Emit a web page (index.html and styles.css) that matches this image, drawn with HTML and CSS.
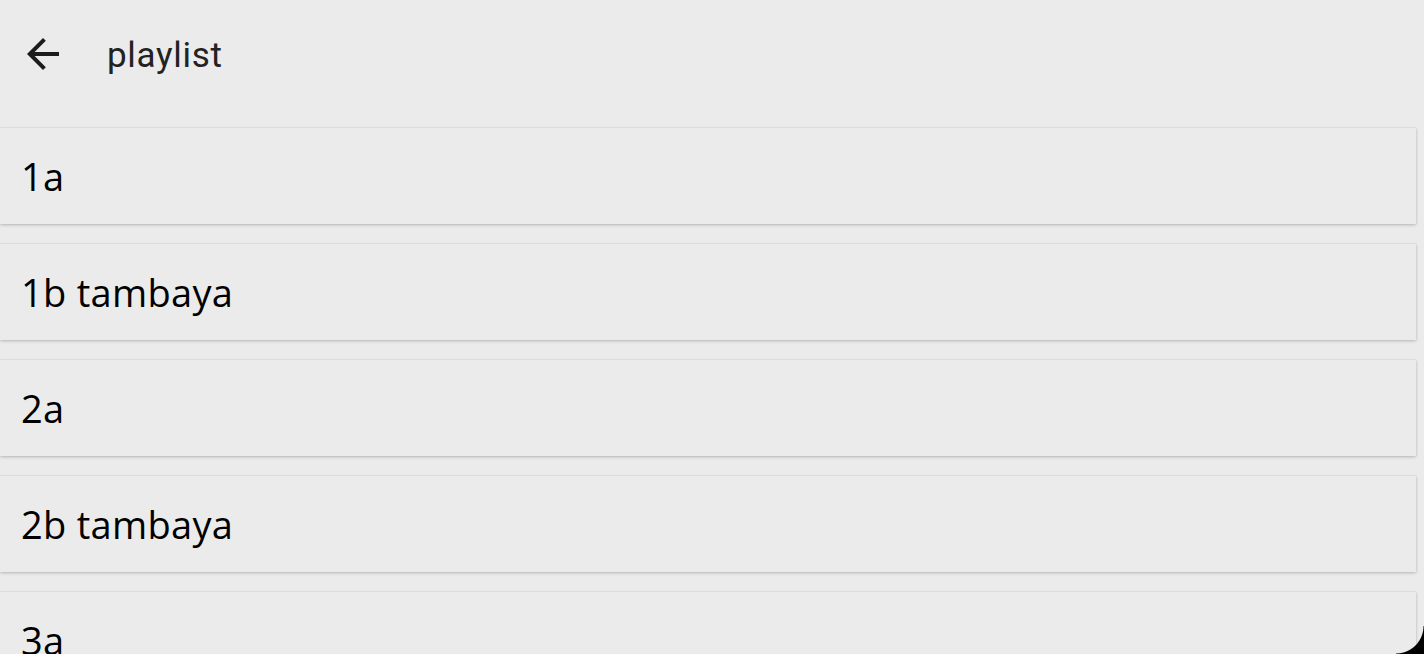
FILE: index.html
```html
<!DOCTYPE html>
<html>
<head>
<meta charset="utf-8">
<link rel="stylesheet" href="styles.css">
</head>
<body>
<div class="app">
  <header class="toolbar">
    <button class="back" aria-label="back">
      <svg viewBox="0 0 24 24" width="48" height="48"><path d="M20 11H7.83l5.59-5.59L12 4l-8 8 8 8 1.41-1.41L7.83 13H20v-2z" fill="#1c1c1c"/></svg>
    </button>
    <h1 class="title">playlist</h1>
  </header>
  <ul class="list">
    <li class="card">1a</li>
    <li class="card">1b tambaya</li>
    <li class="card">2a</li>
    <li class="card">2b tambaya</li>
    <li class="card">3a</li>
  </ul>
</div>
<div class="corner"></div>
</body>
</html>
```
FILE: styles.css
```css
html, body {
  margin: 0;
  padding: 0;
  height: 100%;
  overflow: hidden;
  background: #ebebeb;
}
.app {
  display: flex;
  flex-direction: column;
}
.toolbar {
  height: 108px;
  display: flex;
  align-items: center;
  box-sizing: border-box;
  padding-left: 19px;
}
.back {
  width: 48px;
  height: 48px;
  padding: 0;
  border: 0;
  background: none;
  display: flex;
}
.title {
  margin: 0 0 0 40px;
  font-family: Roboto, sans-serif;
  font-weight: 400;
  font-size: 35px;
  letter-spacing: 0.7px;
  color: #222;
  padding-top: 2px;
}
.list {
  list-style: none;
  margin: 0;
  padding: 20px 8px 0 0;
  display: flex;
  flex-direction: column;
  gap: 20px;
}
.card {
  height: 96px;
  display: flex;
  align-items: center;
  padding-left: 21px;
  background: #ebebeb;
  font-family: "Open Sans", sans-serif;
  font-size: 38px;
  letter-spacing: 0.3px;
  color: #000;
  box-shadow: 0 1px 3px rgba(0,0,0,0.22), 0 0 1px rgba(0,0,0,0.12);
}
.corner {
  position: fixed;
  right: 0;
  bottom: 0;
  width: 28px;
  height: 28px;
  background: radial-gradient(circle at 0 0, transparent 27px, #000 28px);
}
```
